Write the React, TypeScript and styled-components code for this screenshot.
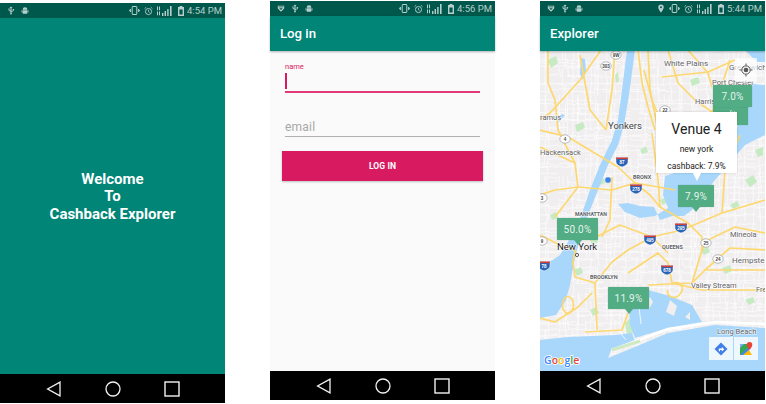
import React from 'react';
import styled, { createGlobalStyle } from 'styled-components';

const PRIMARY = '#008577';
const PRIMARY_DARK = '#00574b';
const ACCENT = '#d81b60';

const GlobalStyle = createGlobalStyle`
  html, body {
    margin: 0;
    padding: 0;
    background: #fff;
    font-family: Roboto, "Liberation Sans", sans-serif;
  }
`;

const Screen = styled.div`
  display: flex;
  gap: 45px;
  width: 766px;
  height: 404px;
  overflow: hidden;
`;

const Phone = styled.div<{ $top: number; $height: number }>`
  display: flex;
  flex-direction: column;
  width: 225px;
  height: ${p => p.$height}px;
  margin-top: ${p => p.$top}px;
`;

const StatusBarRow = styled.div`
  display: flex;
  align-items: center;
  height: 15px;
  flex: none;
  padding: 0 3px 0 7px;
  gap: 4px;
  background: ${PRIMARY_DARK};
`;

const LeftIcons = styled.div`
  display: flex;
  align-items: center;
  gap: 6px;
  flex: 1;
`;

const StatusTime = styled.span`
  font-size: 9.5px;
  margin-left: -1px;
  color: rgba(255, 255, 255, 0.72);
  white-space: nowrap;
`;

const AppBar = styled.div`
  position: relative;
  z-index: 2;
  display: flex;
  align-items: center;
  height: 35px;
  flex: none;
  padding: 0 0 0 10px;
  box-sizing: border-box;
  background: ${PRIMARY};
  color: #fff;
  font-size: 13.2px;
  font-weight: 500;
  box-shadow: 0 1px 2px rgba(0, 0, 0, 0.3);
`;

const Welcome = styled.div`
  flex: 1;
  display: flex;
  align-items: center;
  justify-content: center;
  padding-top: 2px;
  background: ${PRIMARY};
  color: #fff;
  font-size: 15px;
  font-weight: 700;
  line-height: 17.5px;
  text-align: center;
`;

const Form = styled.div`
  flex: 1;
  display: flex;
  flex-direction: column;
  padding: 11px 15px 0;
  background: #fafafa;
`;

const FieldLabel = styled.div`
  font-size: 7.5px;
  line-height: 9px;
  color: ${ACCENT};
`;

const ActiveInput = styled.div`
  height: 18px;
  margin-top: 2px;
  border-bottom: 2px solid #e23a78;
`;

const Caret = styled.div`
  width: 1.5px;
  height: 16px;
  background: ${ACCENT};
`;

const IdleInput = styled.div`
  height: 17px;
  margin-top: 26px;
  border-bottom: 1px solid #b0b0b0;
  color: #a8a8a8;
  font-size: 12px;
  line-height: 16px;
  letter-spacing: 0.2px;
`;

const LoginButton = styled.button`
  height: 30px;
  margin: 14px -3px 0 -3px;
  border: 0;
  padding: 0;
  background: ${ACCENT};
  color: #fff;
  font-family: inherit;
  font-size: 8.5px;
  font-weight: 700;
  letter-spacing: 0.1px;
  box-shadow: 0 1px 2px rgba(0, 0, 0, 0.25);
`;

const MapArea = styled.div`
  position: relative;
  flex: 1;
  overflow: hidden;
  background: #f2eff1;
`;

const MapSvg = styled.svg`
  display: block;
  width: 225px;
  height: 320px;
`;

const Pin = styled.div<{ $x: number; $y: number; $w: number }>`
  position: absolute;
  left: ${p => p.$x}px;
  top: ${p => p.$y}px;
  width: ${p => p.$w}px;
  height: 22px;
  display: flex;
  align-items: center;
  justify-content: center;
  border-radius: 1px;
  background: #52ad84;
  color: rgba(255, 255, 255, 0.88);
  font-size: 10px;
  letter-spacing: 0.2px;
  box-shadow: 0 0 1px rgba(0, 60, 40, 0.5);

  &::after {
    content: '';
    position: absolute;
    left: 50%;
    bottom: -5px;
    margin-left: -4px;
    border-left: 4px solid transparent;
    border-right: 4px solid transparent;
    border-top: 5px solid #52ad84;
  }
`;

const Bubble = styled.div`
  position: absolute;
  left: 116px;
  top: 61px;
  width: 81px;
  height: 61px;
  display: flex;
  flex-direction: column;
  align-items: center;
  background: #fff;
  color: #222;
  font-size: 8.5px;
  box-shadow: 0 0 2px rgba(0, 0, 0, 0.2);

  &::after {
    content: '';
    position: absolute;
    left: 50%;
    bottom: -8px;
    margin-left: -4px;
    border-left: 4px solid transparent;
    border-right: 4px solid transparent;
    border-top: 8px solid #fff;
  }
`;

const BubbleTitle = styled.div`
  margin-top: 9px;
  font-size: 14px;
  line-height: 17px;
`;

const BubbleLine = styled.div`
  margin-top: 6px;
  line-height: 11px;
  white-space: nowrap;
`;

const LocateButton = styled.div`
  position: absolute;
  left: 195px;
  top: 7px;
  width: 22px;
  height: 24px;
  display: flex;
  align-items: center;
  justify-content: center;
  background: rgba(255, 255, 255, 0.72);
`;

const MapToolbar = styled.div`
  position: absolute;
  left: 169px;
  top: 286px;
  display: flex;
  gap: 1px;
`;

const ToolButton = styled.div`
  width: 24px;
  height: 23px;
  display: flex;
  align-items: center;
  justify-content: center;
  background: rgba(255, 255, 255, 0.8);
`;

const NavBar = styled.div`
  display: flex;
  align-items: center;
  justify-content: center;
  flex: none;
  height: 29px;
  gap: 43px;
  background: #000;
`;

const Ic = ({ d, w = 8 }: { d: string; w?: number }) => (
  <svg width={w} height="9" viewBox="0 0 10 10" fill="rgba(255,255,255,0.72)">
    <path d={d} />
  </svg>
);

const USB = 'M5 0l2 2H5.7v4l1.6-1V4H7V3h2v1h-.6v1.5L5.7 7v1a1.1 1.1 0 1 1-1.4 0V6.5L2 5V3.8a.8.8 0 1 1 1 0V4.5l1.3.8V2H3z';
const ANDROID = 'M2 4a3 3 0 0 1 6 0zM2 4.6h6V8a1 1 0 0 1-1 1H3a1 1 0 0 1-1-1zM.7 4.6h.8v3H.7zM8.5 4.6h.8v3h-.8z';
const SHIELD = 'M1 1.5h8v3.6L5 9 1 5.1zM2 2.5v.8h6v-.8zM2.7 4.6L5 7l2.3-2.4z';

function StatusBar({ time, shield, pinIcon }: { time: string; shield?: boolean; pinIcon?: boolean }) {
  return (
    <StatusBarRow>
      <LeftIcons>
        {shield && <Ic d={SHIELD} />}
        <Ic d={USB} />
        <Ic d={ANDROID} />
      </LeftIcons>
      {pinIcon && <Ic d="M5 0a3.4 3.4 0 0 1 3.4 3.4C8.4 6 5 10 5 10S1.6 6 1.6 3.4A3.4 3.4 0 0 1 5 0zm0 2.2a1.2 1.2 0 1 0 0 2.4 1.2 1.2 0 0 0 0-2.4z" />}
      <svg width="11" height="9" viewBox="0 0 11 9" fill="none" stroke="rgba(255,255,255,0.72)">
        <rect x="3.2" y="0.5" width="4.6" height="8" rx="0.6" strokeWidth="1" />
        <path d="M1.5 3v3M9.5 3v3M0.4 3.7v1.6M10.6 3.7v1.6" strokeWidth="0.9" />
      </svg>
      <svg width="9" height="10" viewBox="0 0 10 10" fill="none" stroke="rgba(255,255,255,0.72)">
        <circle cx="5" cy="5.6" r="3.4" strokeWidth="1" />
        <path d="M5 3.8v2l1.2.8M0.6 2.4L2.4.7M9.4 2.4L7.6.7" strokeWidth="0.9" />
      </svg>
      <svg width="17" height="10" viewBox="0 0 17 10" fill="rgba(255,255,255,0.72)">
        <path d="M0 .6h1v3.6H0zM2 .6h1v3.6H2zM0 5.6h1v3.6H0zM2 5.6h1v3.6H2zM5 7h1.4v3H5zM7.6 5H9v5H7.6zM10.2 3h1.4v7h-1.4zM13 0h1.6v10H13z" />
      </svg>
      <svg width="6" height="10" viewBox="0 0 6 10" fill="rgba(255,255,255,0.72)">
        <path fillRule="evenodd" d="M1.6 0h2.8v1H6v9H0V1h1.6zM1.4 3.5v5h3.2v-5z" />
      </svg>
      <StatusTime>{time}</StatusTime>
    </StatusBarRow>
  );
}

function Nav() {
  return (
    <NavBar>
      <svg width="16" height="16" viewBox="0 0 16 16" fill="none" stroke="#f2f2f2" strokeWidth="1.3">
        <path d="M14 1.2v13.6L1.6 8z" />
      </svg>
      <svg width="16" height="16" viewBox="0 0 16 16" fill="none" stroke="#f2f2f2" strokeWidth="1.3">
        <circle cx="8" cy="8" r="7" />
      </svg>
      <svg width="16" height="16" viewBox="0 0 16 16" fill="none" stroke="#f2f2f2" strokeWidth="1.4">
        <rect x="1" y="1" width="14" height="14" />
      </svg>
    </NavBar>
  );
}

// thin white street texture, seeded so every render looks the same
function streets() {
  let seed = 7;
  const rnd = () => {
    seed = (seed * 16807) % 2147483647;
    return seed / 2147483647;
  };
  let d = '';
  for (let x = 540; x < 770; x += 4) {
    const lean = rnd() * 8 - 4;
    for (let y = 50; y < 375; y += 9) {
      if (rnd() < 0.7) d += `M${x + lean} ${y}l${(rnd() * 3 - 1.5).toFixed(1)} 9`;
    }
  }
  for (let y = 50; y < 375; y += 4) {
    const lean = rnd() * 6 - 3;
    for (let x = 540; x < 770; x += 9) {
      if (rnd() < 0.7) d += `M${x} ${y + lean}l9 ${(rnd() * 3 - 1.5).toFixed(1)}`;
    }
  }
  return d;
}

const STREETS = streets();

const WATER = [
  // Hudson and the upper bay
  'M627 50L622 90 618 120 612 140 600 165 590 190 578 225 560 255 545 265 540 270V318L556 315 566 300 570 285 574 262 577 250 588 215 598 190 608 165 618 145 624 125 629 95 635 50z',
  // Sound and East River
  'M765 85L752 84 745 105 737 128 722 155 690 168 665 176 663 195 668 208 655 216 640 218 625 212 618 204 628 203 640 206 654 207 660 220 672 216 684 216 692 210 700 200 715 180 745 145 765 135z',
  // Jamaica Bay
  'M628 296L648 290 670 296 692 305 702 322 668 328 635 338 630 325z',
  // Atlantic
  'M540 340L568 337 615 335 632 333 635 342 612 348 608 358 635 347 668 333 715 325 765 328V372H540z',
  // ponds
  'M581 58l4 1 1 12-3 9-3-6zM557 118l5-4 3 1-6 7zM745 50h20v12h-8z',
];

const PARKS = [
  'M625 323l8-7 4 6-3 11-7 2zM548 60l8-4 2 7-7 5zM690 80l8-3 2 6-8 3zM575 125l8-3 2 6-8 4zM722 112l7-4 2 5-6 3z',
  'M745 180l8-5 4 7-7 5zM730 205l7-4 3 5-7 3zM590 240l6-3 2 5-6 3zM574 270l7-3 2 6-6 3zM590 310l6-3 3 6-6 3zM700 250l8-3 2 5-6 3z',
  'M660 200l6-3 2 5-5 3zM755 150l8-3v8l-5 2zM640 150l6-4 2 6-6 2zM550 215l6-3 2 6-6 2zM598 180l6-2 1 5-5 2zM615 75l3-3 1 9-3 2z',
  'M722 268l8-3 2 6-7 3zM745 300l8-3 2 5-6 3zM655 300l3 2-1 4-3-2zM610 345l14-5 1 4-13 5z',
];

const ROADS = [
  'M548 50V83L555 100 558 130 568 150 575 163 578 187 555 217',
  'M615 50L612 90 606 130',
  'M638 50L642 83 648 107 655 130',
  'M648 50L650 90 658 130',
  'M644 70L652 100 660 120',
  'M668 50L678 83 695 100 712 112',
  'M662 77L708 72 735 60',
  'M688 50L708 73 712 87',
  'M601 50L580 80 550 113 540 120',
  'M540 130L568 137 618 167 635 183 675 190',
  'M612 177L610 220 602 237',
  'M652 133L658 180 660 207 688 223 702 237 702 250',
  'M765 200L722 213 682 230 652 237 628 250',
  'M540 147L575 163',
  'M765 233L735 227 708 240 702 250 692 283',
  'M573 263L575 277 595 283 597 330',
  'M628 273L658 253 668 263 672 283 702 290 765 290',
  'M648 285L692 283 705 270 765 270',
  'M540 318L555 322 578 307 592 293',
  'M628 313L622 330 585 332',
  'M590 240L620 225 652 237 668 253',
  'M575 250L573 263',
  'M740 135L725 170 722 213',
  'M668 290a6 5 0 0 0 12 4 6 6 0 0 0-8-10',
  'M595 283L612 262 628 250',
  'M765 250L730 248 705 270',
  'M540 235L560 245 575 250',
  'M578 187L612 190 635 183',
  'M730 60L722 85 712 112',
  'M580 55L590 110 606 130',
  'M540 195L555 190 578 187',
  'M635 183L650 195 660 207',
];

const MapText = styled.text<{ $size: number; $weight?: number; $fill?: string }>`
  font-family: Roboto, "Liberation Sans", sans-serif;
  font-size: ${p => p.$size}px;
  font-weight: ${p => p.$weight || 400};
  fill: ${p => p.$fill || '#5f6368'};
  paint-order: stroke;
  stroke: rgba(255, 255, 255, 0.8);
  stroke-width: 1.2px;
`;

const LABELS: [string, number, number, number, number?, string?][] = [
  ['White Plains', 664, 66, 8],
  ['Greenwich', 729, 70, 8],
  ['Port Chester', 712, 85, 7.5],
  ['Harrison', 695, 104, 7.5],
  ['ramus', 540, 120, 7.5],
  ['Yonkers', 608, 129, 9.5, 400, '#3c4043'],
  ['Hackensack', 540, 155, 7.5],
  ['BRONX', 633, 179, 5.5, 700],
  ['MANHATTAN', 575, 216, 5.2, 700],
  ['New York', 557, 250, 9.5, 400, '#202124'],
  ['QUEENS', 662, 249, 5.5, 700],
  ['Mineola', 730, 237, 7.5],
  ['Hempstead', 732, 263, 8],
  ['BROOKLYN', 590, 279, 5.5, 700],
  ['Valley Stream', 691, 288, 7.5],
  ['Fre', 756, 292, 7.5],
  ['Long Beach', 717, 334, 7.5],
];

const INTERSTATES: [string, number, number][] = [
  ['87', 622, 162],
  ['278', 636, 189],
  ['495', 650, 240],
  ['295', 681, 228],
  ['678', 667, 270],
  ['78', 544, 266],
];

const ROUTES: [string, number, number][] = [
  ['9W', 616, 55],
  ['303', 606, 66],
  ['22', 665, 110],
  ['4', 565, 139],
  ['3', 542, 198],
  ['9', 542, 241],
  ['25', 706, 243],
  ['24', 718, 259],
];

const ShieldText = styled.text<{ $fill: string }>`
  font-family: "Liberation Sans", sans-serif;
  font-size: 4.5px;
  font-weight: 700;
  text-anchor: middle;
  fill: ${p => p.$fill};
`;

const LogoText = styled.text`
  font-family: "Open Sans", "Liberation Sans", sans-serif;
  font-size: 10.5px;
  font-weight: 600;
  paint-order: stroke;
  stroke: #fff;
  stroke-width: 1.6px;
`;

function MapDrawing() {
  return (
    <MapSvg viewBox="540 51 225 320">
      <rect x="540" y="50" width="225" height="321" fill="#f1eef0" />
      <path d={STREETS} stroke="#fff" strokeWidth="0.6" fill="none" />
      {PARKS.map(d => <path key={d} d={d} fill="#c6ebc3" />)}
      {WATER.map(d => <path key={d} d={d} fill="#a8d7fb" />)}
      <path d="M612 350L668 329 716 322 765 324" fill="none" stroke="#fff" strokeWidth="2.5" />
      <path d="M612 350L640 341" fill="none" stroke="#cdeac4" strokeWidth="3" />
      <path d="M638 298l3 26M618 330l8 10" fill="none" stroke="#fff" strokeWidth="0.8" />
      <path d="M670 300l-4 12 8 4 3-10zM690 312l-5 5 5 3zM650 297l-5 8 4 4 4-7z" fill="#f1eef0" />
      {ROADS.map(d => (
        <path key={d} d={d} fill="none" stroke="#fdd86f" strokeWidth="1.7" strokeLinejoin="round" />
      ))}
      <ellipse cx="568" cy="305" rx="5.5" ry="8.5" fill="none" stroke="#fdd86f" strokeWidth="1.7" />
      {ROUTES.map(([t, x, y]) => (
        <g key={t}>
          <ellipse cx={x} cy={y} rx="5.2" ry="4.2" fill="#fff" stroke="#8a8f94" strokeWidth="0.6" />
          <ShieldText $fill="#444" x={x} y={y + 1.6}>{t}</ShieldText>
        </g>
      ))}
      {INTERSTATES.map(([t, x, y]) => (
        <g key={t}>
          <path d={`M${x - 6} ${y - 4.5}h12v4c0 3-3 4.5-6 5.5-3-1-6-2.5-6-5.5z`} fill="#2a62b5" stroke="#fff" strokeWidth="0.5" />
          <path d={`M${x - 6} ${y - 4.5}h12v1.6h-12z`} fill="#d2403a" />
          <ShieldText $fill="#fff" x={x} y={y + 2.3}>{t}</ShieldText>
        </g>
      ))}
      {LABELS.map(([t, x, y, s, w, f]) => (
        <MapText key={t} x={x} y={y} $size={s} $weight={w} $fill={f}>{t}</MapText>
      ))}
      <circle cx="577" cy="255" r="1.6" fill="#fff" stroke="#333" strokeWidth="0.8" />
      <circle cx="608" cy="180" r="3" fill="#3f7fe8" stroke="#a8d7fb" strokeWidth="0.5" />
      <LogoText x="544" y="364">
        <tspan fill="#4285f4">G</tspan>
        <tspan fill="#ea4335">o</tspan>
        <tspan fill="#fbbc05">o</tspan>
        <tspan fill="#4285f4">g</tspan>
        <tspan fill="#34a853">l</tspan>
        <tspan fill="#ea4335">e</tspan>
      </LogoText>
    </MapSvg>
  );
}

export default function App() {
  return (
    <>
      <GlobalStyle />
      <Screen>
        <Phone $top={3} $height={400}>
          <StatusBar time="4:54 PM" />
          <Welcome>
            <div>
              Welcome
              <br />
              To
              <br />
              Cashback Explorer
            </div>
          </Welcome>
          <Nav />
        </Phone>

        <Phone $top={1} $height={399}>
          <StatusBar time="4:56 PM" shield />
          <AppBar>Log in</AppBar>
          <Form>
            <FieldLabel>name</FieldLabel>
            <ActiveInput>
              <Caret />
            </ActiveInput>
            <IdleInput>email</IdleInput>
            <LoginButton>LOG IN</LoginButton>
          </Form>
          <Nav />
        </Phone>

        <Phone $top={1} $height={399}>
          <StatusBar time="5:44 PM" shield pinIcon />
          <AppBar>Explorer</AppBar>
          <MapArea>
            <MapDrawing />
            <Pin $x={173} $y={52} $w={35}>..%</Pin>
            <Pin $x={173} $y={34} $w={39}>7.0%</Pin>
            <Pin $x={138} $y={134} $w={36}>7.9%</Pin>
            <Pin $x={17} $y={167} $w={41}>50.0%</Pin>
            <Pin $x={68} $y={236} $w={41}>11.9%</Pin>
            <Bubble>
              <BubbleTitle>Venue 4</BubbleTitle>
              <BubbleLine>new york</BubbleLine>
              <BubbleLine>cashback: 7.9%</BubbleLine>
            </Bubble>
            <LocateButton>
              <svg width="14" height="14" viewBox="0 0 14 14" fill="none" stroke="#555">
                <circle cx="7" cy="7" r="4.2" strokeWidth="1" />
                <circle cx="7" cy="7" r="2.3" fill="#555" stroke="none" />
                <path d="M7 .5v2M7 11.5v2M.5 7h2M11.5 7h2" strokeWidth="1" />
              </svg>
            </LocateButton>
            <MapToolbar>
              <ToolButton>
                <svg width="14" height="14" viewBox="0 0 14 14">
                  <path d="M7 .5L13.5 7 7 13.5.5 7z" fill="#3f7fe8" />
                  <path d="M4.8 9.2V6.6h3V5l2.4 2.3-2.4 2.3V8H6v1.2z" fill="#fff" />
                </svg>
              </ToolButton>
              <ToolButton>
                <svg width="14" height="14" viewBox="0 0 14 14">
                  <path d="M1 2h9v11H1z" fill="#34a853" />
                  <path d="M1 13L10 5v8z" fill="#4285f4" />
                  <path d="M1 2h4L1 6z" fill="#7baaf7" />
                  <path d="M4 13l6-5 3 5z" fill="#fbbc05" />
                  <path d="M10.5 0a2.8 2.8 0 0 1 2.8 2.8C13.3 5 10.5 8 10.5 8S7.7 5 7.7 2.8A2.8 2.8 0 0 1 10.5 0z" fill="#ea4335" />
                </svg>
              </ToolButton>
            </MapToolbar>
          </MapArea>
          <Nav />
        </Phone>
      </Screen>
    </>
  );
}
